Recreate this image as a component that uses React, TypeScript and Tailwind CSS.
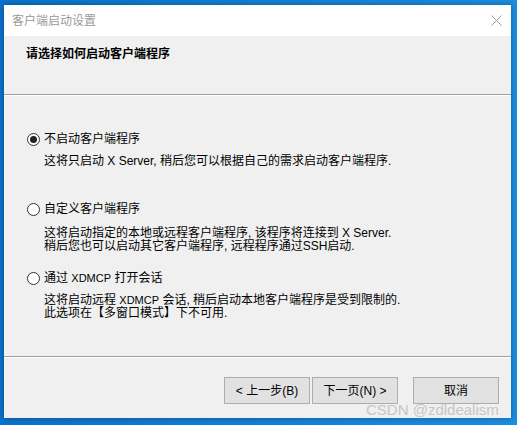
import React from 'react'

const font = { fontFamily: '"Liberation Sans", "Noto Sans CJK SC", sans-serif' }

function Radio({ checked, label }: { checked?: boolean; label: React.ReactNode }) {
  return (
    <div className="flex items-center h-[16px] pl-[23px]">
      <span className="w-[13px] h-[13px] rounded-full border border-[#333] bg-white flex items-center justify-center">
        {checked && <span className="w-[7px] h-[7px] rounded-full bg-[#222]" />}
      </span>
      <span className="ml-[4px] text-[12px] text-black leading-[16px]">{label}</span>
    </div>
  )
}

function Btn({ children, className = '' }: { children: React.ReactNode; className?: string }) {
  return (
    <button className={`w-[86px] h-[27px] bg-[#e1e1e1] border border-[#adadad] text-[12px] text-black flex items-center justify-center ${className}`}>
      {children}
    </button>
  )
}

export default function App() {
  return (
    <div className="w-[517px] h-[425px] bg-gradient-to-r from-[#0a72cc] to-[#1b8fe2] pt-[5px] pl-[4px] overflow-hidden relative" style={font}>
      <div className="w-[507px] h-[413px] bg-[#f0f0f0] flex flex-col shadow-[0_0_6px_rgba(0,0,0,0.35)]">
        {/* title bar */}
        <div className="h-[31px] bg-white flex items-center justify-between pl-[8px] pr-[9px]">
          <span className="text-[12px] text-[#9a9a9a]">客户端启动设置</span>
          <svg width="11" height="11" viewBox="0 0 11 11">
            <path d="M0.5 0.5 L10.5 10.5 M10.5 0.5 L0.5 10.5" stroke="#999" strokeWidth="1" />
          </svg>
        </div>

        {/* header */}
        <div className="h-[58px] pl-[22px] pt-[10px]">
          <div className="text-[12px] font-bold text-black leading-[16px]">请选择如何启动客户端程序</div>
        </div>
        <div className="border-t border-[#a0a0a0] border-b border-b-white" />

        {/* options */}
        <div className="flex-1 flex flex-col pt-[35px]">
          <Radio checked label="不启动客户端程序" />
          <div className="pl-[40px] mt-[8px] text-[12px] leading-[13px] text-black">
            这将只启动 X Server, 稍后您可以根据自己的需求启动客户端程序.
          </div>

          <div className="mt-[33px]">
            <Radio label="自定义客户端程序" />
          </div>
          <div className="pl-[40px] mt-[10px] text-[12px] leading-[12px] text-black">
            <div className="leading-[13px]">这将启动指定的本地或远程客户端程序, 该程序将连接到 X Server.</div>
            <div className="leading-[13px]">稍后您也可以启动其它客户端程序, 远程程序通过SSH启动.</div>
          </div>

          <div className="mt-[17px]">
            <Radio label={<>通过 <span className="text-[11px]">XDMCP</span> 打开会话</>} />
          </div>
          <div className="pl-[40px] mt-[8px] text-[12px] text-black">
            <div className="leading-[13px]">这将启动远程 <span className="text-[11px]">XDMCP</span> 会话, 稍后启动本地客户端程序是受到限制的.</div>
            <div className="leading-[13px]">此选项在【多窗口模式】下不可用.</div>
          </div>
        </div>

        <div className="border-t border-[#a0a0a0] border-b border-b-white" />

        {/* footer */}
        <div className="h-[60px] flex justify-end items-start pt-[19px] pr-[12px]">
          <Btn>&lt; 上一步(B)</Btn>
          <Btn className="ml-[2px]">下一页(N) &gt;</Btn>
          <Btn className="ml-[15px]">取消</Btn>
        </div>
      </div>
      <div className="absolute left-[366px] top-[401px] text-[15px] text-[#c6c6c6] leading-[18px]" style={{ fontFamily: '"Liberation Sans", sans-serif' }}>
        CSDN @zdldealism
      </div>
    </div>
  )
}
